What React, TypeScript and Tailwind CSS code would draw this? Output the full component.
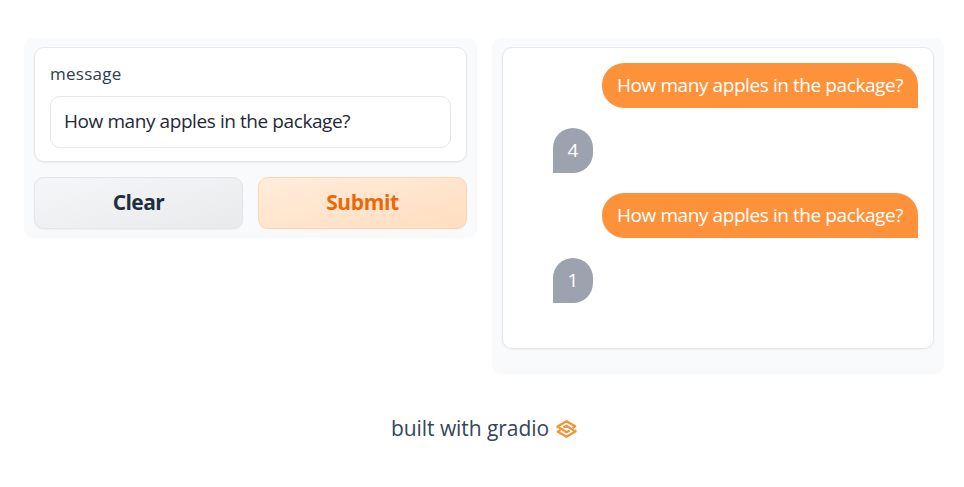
const question = "How many apples in the package?";

function UserMessage() {
  return (
    <div className="h-[45px] w-[316px] self-end whitespace-nowrap rounded-[22px] rounded-br-none bg-[#fd923a] pl-[15px] text-[19px] leading-[44px] tracking-[-0.42px] text-white">
      {question}
    </div>
  );
}

function BotMessage({ answer }: { answer: string }) {
  return (
    <div className="ml-[35px] h-[45px] w-10 rounded-[20px] rounded-bl-none bg-[#9ca3af] text-center text-[19px] leading-[44px] text-white">
      {answer}
    </div>
  );
}

function GradioLogo() {
  return (
    <svg width="21" height="20" viewBox="0 0 21 20" fill="none" stroke="#f2943c" strokeWidth="2.3" strokeLinejoin="round">
      <path d="M13.6 11.4 10.5 13.2 1.6 7.4 10.5 2.2 19.2 7.2 16.4 9" />
      <path d="M7.4 8.6 10.5 6.8 19.4 12.6 10.5 17.8 1.8 12.8 4.6 11" />
      <path d="M1.2 7.6v1.8M19.8 12.4v-1.8" strokeWidth="1.2" />
    </svg>
  );
}

export default function App() {
  return (
    <main className="h-[487px] w-[964px] overflow-hidden bg-white pl-6 pt-[38px] font-['Open_Sans','Noto_Sans',sans-serif] text-gray-800">
      <div className="flex h-[336px] items-start gap-[15px]">
        <section className="flex h-[200px] w-[453px] flex-col gap-[15px] rounded-[9px] bg-[#f9fafb] px-[10px] pt-[9px]">
          <div className="h-[115px] rounded-[10px] border border-[#e5e7eb] bg-white px-[15px] pt-[13px] shadow-[0_1px_2px_rgba(0,0,0,0.05)]">
            <label htmlFor="message" className="block h-[35px] text-[17px] leading-[26px] tracking-[0.25px] text-[#303d4e]">message</label>
            <input
              id="message"
              defaultValue={question}
              className="block h-[52px] w-[401px] rounded-[10px] border border-[#e5e7eb] bg-white px-[13px] pb-[2px] text-[19px] tracking-[-0.42px] text-[#1f2937] outline-none"
            />
          </div>
          <div className="flex gap-[15px] text-[21px] font-bold leading-[48px] tracking-[-0.35px]">
            <button className="h-[52px] w-[209px] rounded-[10px] border border-[#e2e5e9] bg-linear-to-br from-[#f5f6f7] to-[#e8eaec] pb-[2px] tracking-[-0.6px] text-[#1f2f40] shadow-[0_1px_2px_rgba(0,0,0,0.05)]">Clear</button>
            <button className="h-[52px] w-[209px] rounded-[10px] border border-[#fdd5af] bg-linear-to-br from-[#ffeddb] to-[#ffddc0] pb-[2px] text-[#ee6706] shadow-[0_1px_2px_rgba(0,0,0,0.03)]">Submit</button>
          </div>
        </section>
        <section className="h-[336px] w-[452px] rounded-[9px] bg-[#f9fafb] px-[10px] pt-[9px]">
          <div className="flex h-[302px] flex-col gap-5 rounded-[10px] border border-[#e5e7eb] bg-white px-[15px] pt-[15px] shadow-[0_1px_2px_rgba(0,0,0,0.05)]">
            <UserMessage />
            <BotMessage answer="4" />
            <UserMessage />
            <BotMessage answer="1" />
          </div>
        </section>
      </div>
      <footer className="flex items-center gap-[7px] pl-[367px] pt-[40px] text-[21px] leading-[30px] tracking-[-0.06px] text-[#34465a]">
        <span className="w-[158px] -translate-y-px whitespace-nowrap">built with gradio</span>
        <GradioLogo />
      </footer>
    </main>
  );
}
